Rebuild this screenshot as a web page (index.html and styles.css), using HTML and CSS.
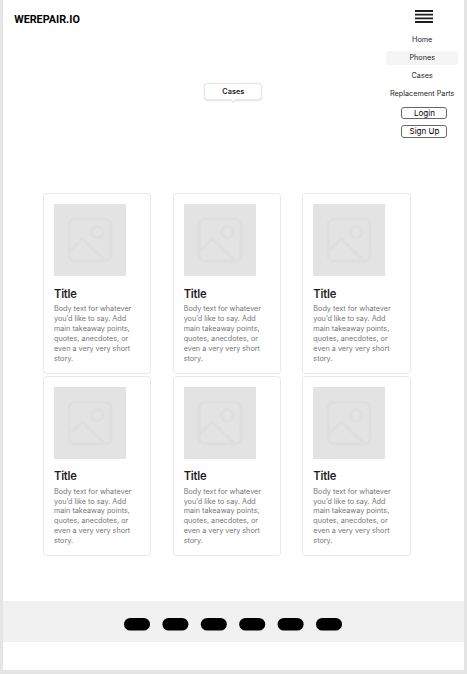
FILE: index.html
```html
<!DOCTYPE html>
<html lang="en">
<head>
<meta charset="utf-8">
<title>WEREPAIR.IO</title>
<link rel="stylesheet" href="styles.css">
</head>
<body>
<svg class="defs" aria-hidden="true">
  <symbol id="picture" viewBox="0 0 72 72">
    <rect x="15.3" y="15.3" width="41.6" height="41.6" rx="5.5"/>
    <circle cx="43.3" cy="28.3" r="5.8"/>
    <path d="M16 46.5 28.3 35 51 56.5"/>
  </symbol>
</svg>
<div class="page">
  <header class="header">
    <div class="logo">WEREPAIR.IO</div>
    <div class="tooltip">Cases</div>
    <nav class="nav">
      <svg class="burger" viewBox="0 0 18 13"><path d="M0 1h18M0 4.7h18M0 8.4h18M0 12h18"/></svg>
      <a class="link">Home</a>
      <a class="link active">Phones</a>
      <a class="link">Cases</a>
      <a class="link">Replacement Parts</a>
      <button class="button">Login</button>
      <button class="button">Sign Up</button>
    </nav>
  </header>
  <main class="cards">
    <article class="card"><svg class="image"><use href="#picture"/></svg><h2>Title</h2><p>Body text for whatever<br>you’d like to say. Add<br>main takeaway points,<br>quotes, anecdotes, or<br>even a very very short<br>story.</p></article>
    <article class="card"><svg class="image"><use href="#picture"/></svg><h2>Title</h2><p>Body text for whatever<br>you’d like to say. Add<br>main takeaway points,<br>quotes, anecdotes, or<br>even a very very short<br>story.</p></article>
    <article class="card"><svg class="image"><use href="#picture"/></svg><h2>Title</h2><p>Body text for whatever<br>you’d like to say. Add<br>main takeaway points,<br>quotes, anecdotes, or<br>even a very very short<br>story.</p></article>
    <article class="card"><svg class="image"><use href="#picture"/></svg><h2>Title</h2><p>Body text for whatever<br>you’d like to say. Add<br>main takeaway points,<br>quotes, anecdotes, or<br>even a very very short<br>story.</p></article>
    <article class="card"><svg class="image"><use href="#picture"/></svg><h2>Title</h2><p>Body text for whatever<br>you’d like to say. Add<br>main takeaway points,<br>quotes, anecdotes, or<br>even a very very short<br>story.</p></article>
    <article class="card"><svg class="image"><use href="#picture"/></svg><h2>Title</h2><p>Body text for whatever<br>you’d like to say. Add<br>main takeaway points,<br>quotes, anecdotes, or<br>even a very very short<br>story.</p></article>
  </main>
  <footer class="footer">
    <svg class="pills" viewBox="0 0 218 13">
      <rect width="26" height="12.6" rx="6.3"/>
      <rect x="38.4" width="26" height="12.6" rx="6.3"/>
      <rect x="76.8" width="26" height="12.6" rx="6.3"/>
      <rect x="115.2" width="26" height="12.6" rx="6.3"/>
      <rect x="153.6" width="26" height="12.6" rx="6.3"/>
      <rect x="192" width="26" height="12.6" rx="6.3"/>
    </svg>
  </footer>
</div>
</body>
</html>
```
FILE: styles.css
```css
* { box-sizing: border-box; }

body {
  margin: 0;
  height: 674px;
  padding: 0 3.5px 4px 2.7px;
  background: #e5e5e5;
  font-family: Inter, sans-serif;
  color: #1e1e1e;
  overflow: hidden;
}

.defs { position: absolute; width: 0; height: 0; }

.page {
  height: 670px;
  display: flex;
  flex-direction: column;
  background: #fff;
}

.header {
  position: relative;
  height: 193.4px;
  display: flex;
  justify-content: space-between;
}

.logo {
  margin: 13px 0 0 11.5px;
  font: 700 10.8px/13px Roboto, sans-serif;
  color: #000;
}

.tooltip {
  position: absolute;
  left: 201.6px;
  top: 83px;
  width: 58px;
  height: 17px;
  border: 1px solid #e6e6e6;
  border-radius: 3.5px;
  background: #fff;
  box-shadow: 0 .5px 1.5px #0000001c;
  font-size: 7.3px;
  line-height: 15.5px;
  font-weight: 600;
  text-align: center;
}

.tooltip::after {
  content: "";
  position: absolute;
  left: 26px;
  bottom: -2.5px;
  width: 4px;
  height: 4px;
  background: #fff;
  border: solid #e2e2e2;
  border-width: 0 1px 1px 0;
  transform: rotate(45deg);
}

.nav {
  width: 72px;
  margin: 10px 5.3px 0 0;
  display: flex;
  flex-direction: column;
  align-items: center;
}

.burger {
  width: 18px;
  height: 13px;
  margin: 0 0 10px 4px;
  flex: none;
  stroke: #1e1e1e;
  stroke-width: 1.8;
}

.link {
  width: 72px;
  height: 14.4px;
  margin-bottom: 3.6px;
  flex: none;
  border-radius: 3.6px;
  font-size: 7.25px;
  line-height: 14.4px;
  text-align: center;
  white-space: nowrap;
}

.active { background: #f5f5f5; }

.button {
  width: 46px;
  height: 12.6px;
  margin: 1.6px 0 4.2px 4.5px;
  padding: 0;
  flex: none;
  border: 1px solid #666;
  border-radius: 3px;
  background: #fff;
  color: #000;
  font: 400 8px/11px Inter, sans-serif;
  white-space: nowrap;
}

.cards {
  display: grid;
  grid-template-columns: repeat(3, 108.4px);
  grid-auto-rows: 180.4px;
  gap: 2px 21.3px;
  margin-left: 40.4px;
}

.card {
  padding: 9.9px;
  border: 1px solid #e8e8e8;
  border-radius: 3.6px;
}

.image {
  display: block;
  width: 72px;
  height: 72px;
  background: #e3e3e3;
  fill: none;
  stroke: #dedede;
  stroke-width: 3;
}

h2 {
  margin: 11.3px 0 3.7px;
  font-size: 11.2px;
  line-height: 13px;
  font-weight: 600;
  letter-spacing: -.22px;
}

p {
  margin: 0;
  font-size: 7.22px;
  line-height: 9.9px;
  color: #767676;
  white-space: nowrap;
}

.footer {
  height: 41px;
  margin-top: 44.8px;
  display: flex;
  justify-content: center;
  align-items: center;
  background: #f1f1f1;
}

.pills {
  width: 218px;
  height: 13px;
  margin-top: 7px;
  fill: #000;
}
```
